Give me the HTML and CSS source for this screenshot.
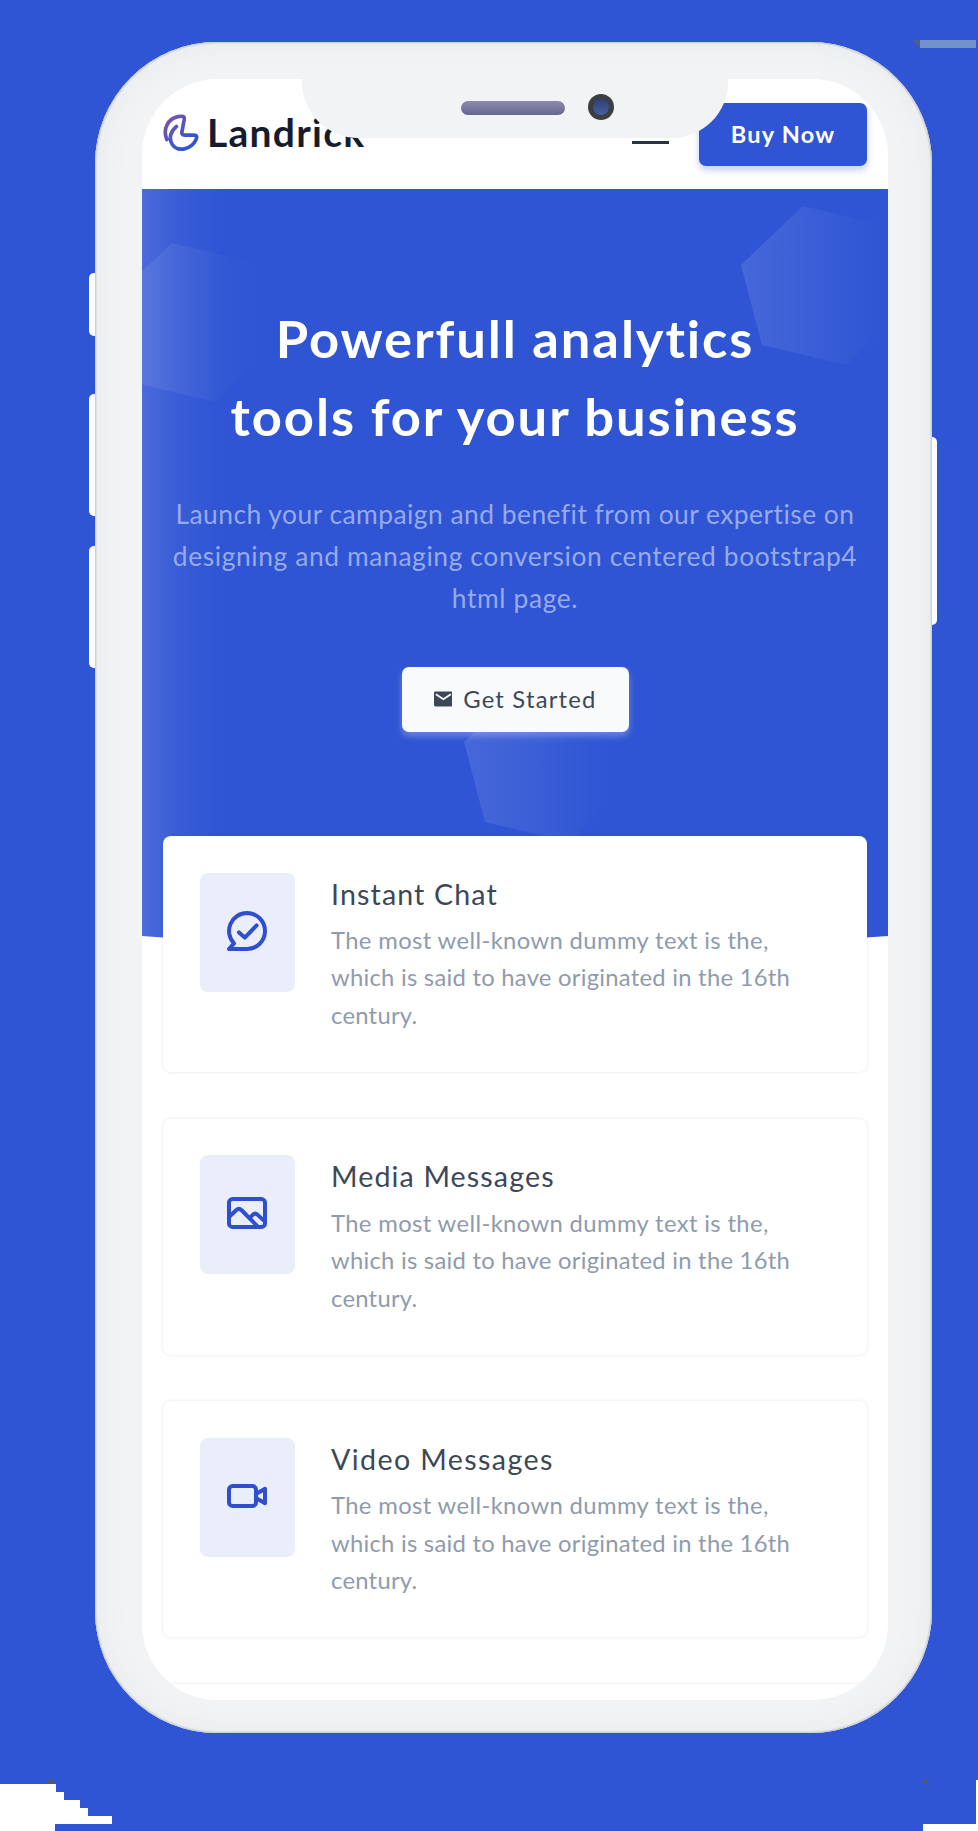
FILE: index.html
```html
<!DOCTYPE html>
<html lang="en">
<head>
<meta charset="utf-8">
<title>Landrick</title>
<link rel="stylesheet" href="styles.css">
</head>
<body>
<svg class="backdrop" viewBox="0 0 978 1831" aria-hidden="true">
  <path d="M912 40h8v7z" fill="#50607e"/>
  <path d="M920 40h56v8h-56z" fill="#7292cc"/>
  <path d="M0 1784h56v8h8v8h16v8h8v8h24v8H55v7H0zM976 1780h2v51h-55v-7h53z" fill="#fff"/>
  <path d="M48 1780h5v4h-5zM923 1780h5v4h-5z" fill="#4f5a6c"/>
</svg>
<main class="phone">
  <i class="key key-mute"></i><i class="key key-up"></i><i class="key key-down"></i><i class="key key-power"></i>
  <div class="bezel">
  <div class="screen">
    <header class="topbar">
      <a class="brand">
        <svg class="brand-mark" viewBox="0 0 36 38">
          <defs><linearGradient id="mark" x1="0" y1="0" x2="1" y2="1"><stop offset="0.1" stop-color="#7455ad"/><stop offset="0.8" stop-color="#2f55d4"/></linearGradient></defs>
          <path d="M3.800 25.500C-.5 15 5 4.500 15 2.600c5-.8 6.800-.4 6.200 2.900L19 17.500c-.5 2.500.5 3.700 2.500 3.700H31c3 0 3.300 1.800 1.800 4.800-4.500 9.500-18 12.500-23.500 4.500C5.500 24.500 7.500 17 13.500 12.500" fill="none" stroke="url(#mark)" stroke-width="3.700" stroke-linecap="round" stroke-linejoin="round"/>
        </svg>
        <span class="brand-name">Landrick</span>
      </a>
      <div class="actions">
        <span class="menu"></span>
        <a class="buy">Buy Now</a>
      </div>
    </header>
    <section class="hero">
      <svg class="shapes" viewBox="0 0 746 760" aria-hidden="true">
        <defs>
          <linearGradient id="fade"><stop offset="0" stop-color="#fff" stop-opacity=".11"/><stop offset=".86" stop-color="#fff" stop-opacity="0"/></linearGradient>
          <linearGradient id="edge"><stop offset="0" stop-color="#fff" stop-opacity=".13"/><stop offset=".45" stop-color="#fff" stop-opacity=".045"/><stop offset="1" stop-color="#fff" stop-opacity="0"/></linearGradient>
          <path id="hex" d="M62 0 0 59l21 80 84 20 62-60-21-79z" fill="url(#fade)"/>
        </defs>
        <path d="M0 0h746v747Q373 775 0 747z" fill="#2f55d4"/>
        <path d="M0 0h80v751L0 747z" fill="url(#edge)"/>
        <use href="#hex" x="599" y="17"/><use href="#hex" x="-32" y="54"/><use href="#hex" x="322" y="494"/>
      </svg>
      <h1 class="headline"><span class="headline-top">Powerfull analytics</span><br><span class="headline-end">tools for your business</span></h1>
      <p class="lead"><span class="lead-first">Launch your campaign and benefit from our expertise on</span><br><span>designing and managing conversion centered bootstrap4</span><br><span>html page.</span></p>
      <a class="start">
        <svg class="mail" viewBox="0 0 20 16"><rect width="20" height="16" rx="1.500" fill="#3c4858"/><path d="m2 2.800 8 5.400 8-5.400" fill="none" stroke="#fff" stroke-width="1.900"/></svg>
        <span>Get Started</span>
      </a>
    </section>
    <section class="features">
      <article class="card">
        <div class="tile"><svg class="icon" viewBox="0 0 24 24"><path d="M12 3a9 9 0 0 0-6.500 15.200L3 21h9a9 9 0 0 0 0-18z"/><path d="m8 12.700 2.900 2.600 5.900-6.100"/></svg></div>
        <div class="body"><h2 class="title">Instant Chat</h2><p class="text"><span class="text-first">The most well-known dummy text is the,</span><br><span>which is said to have originated in the 16th</span><br><span>century.</span></p></div>
      </article>
      <article class="card">
        <div class="tile"><svg class="icon" viewBox="0 0 24 24"><rect x="3" y="5" width="18" height="14" rx="1.800"/><path d="m3 14 3.700-3.500c.8-.7 1.700-.7 2.500 0l8.200 8.300M13.500 14.300l1.500-1.500c.7-.6 1.500-.6 2.200 0L21 16.300"/></svg></div>
        <div class="body"><h2 class="title">Media Messages</h2><p class="text"><span class="text-first">The most well-known dummy text is the,</span><br><span>which is said to have originated in the 16th</span><br><span>century.</span></p></div>
      </article>
      <article class="card">
        <div class="tile"><svg class="icon" viewBox="0 0 24 24"><rect x="3" y="7" width="13.500" height="10" rx="1.800"/><path d="m16.500 11 4.500-2.600v7.200L16.500 13"/></svg></div>
        <div class="body"><h2 class="title title-video">Video Messages</h2><p class="text"><span class="text-first">The most well-known dummy text is the,</span><br><span>which is said to have originated in the 16th</span><br><span>century.</span></p></div>
      </article>
      <article class="card"></article>
    </section>
  </div>
  </div>
  <div class="notch"><i class="speaker"></i><i class="camera"></i></div>
</main>
</body>
</html>
```
FILE: styles.css
```css
* { box-sizing: border-box; }
body {
  margin: 0;
  height: 1831px;
  position: relative;
  overflow: hidden;
  background: #2f55d4;
  font-family: Lato, "Noto Sans", sans-serif;
}
h1, h2, p { margin: 0; font-weight: 400; }
svg { display: block; }
span { white-space: nowrap; }
.backdrop { position: absolute; inset: 0; width: 978px; height: 1831px; }

.phone { position: relative; width: 837px; height: 1691px; margin: 42px 0 0 95px; }
.bezel {
  position: relative;
  height: 1691px;
  padding: 37px 44px 33px 47px;
  border-radius: 122px;
  background: #f1f3f5;
  box-shadow: inset 0 0 2px 1px #bfc5c9, inset 0 0 28px 4px #e9ebec;
}
.key { position: absolute; width: 12px; background: #fff; border-radius: 5px; }
.key-mute { left: -6px; top: 231px; height: 63px; }
.key-up { left: -6px; top: 352px; height: 122px; }
.key-down { left: -6px; top: 504px; height: 122px; }
.key-power { right: -5px; top: 395px; height: 188px; }
.notch {
  position: absolute;
  left: 207px;
  top: 36px;
  width: 426px;
  height: 60px;
  border-radius: 0 0 56px 56px;
  background: #f1f3f5;
}
.speaker { position: absolute; left: 159px; top: 23px; width: 104px; height: 14px; border-radius: 7px; background: linear-gradient(#8c8aae, #66658b); }
.camera { position: absolute; left: 286px; top: 16px; width: 26px; height: 26px; border-radius: 50%; border: 5px solid #3b3e43; background: linear-gradient(#2b4178, #4a5f9b); }

.screen { height: 1621px; overflow: hidden; border-radius: 76px; background: #fff; }
.topbar { height: 110px; padding: 24px 21px 0; display: flex; justify-content: space-between; align-items: flex-start; }
.brand { display: flex; gap: 8px; padding-top: 9px; }
.brand-mark { width: 36px; height: 38px; margin-top: 2px; }
.brand-name { font-size: 39px; line-height: 40px; font-weight: 700; letter-spacing: 1.250px; color: #161c2d; }
.actions { display: flex; gap: 30px; }
.menu { width: 37px; height: 3px; margin-top: 38px; background: #2a3143; }
.buy {
  width: 168px;
  height: 63px;
  border-radius: 7px;
  background: #2f55d4;
  color: #fff;
  font-size: 23.500px;
  font-weight: 700;
  line-height: 62px;
  letter-spacing: 1.250px;
  text-align: center;
  box-shadow: 0 4px 7px rgba(47, 85, 212, .3);
}

.hero { position: relative; height: 647px; display: flex; flex-direction: column; align-items: center; text-align: center; }
.shapes { position: absolute; left: 0; top: 0; width: 746px; height: 760px; }
.headline { position: relative; padding-top: 110px; font-size: 52.500px; line-height: 78px; font-weight: 700; color: #fff; }
.headline-top { letter-spacing: 1.900px; }
.headline-end { letter-spacing: 1.950px; }
.lead { position: relative; margin-top: 38px; font-size: 26.400px; line-height: 42px; letter-spacing: .600px; color: #97aaea; }
.lead-first { letter-spacing: .470px; }
.start {
  position: relative;
  margin-top: 48px;
  width: 227px;
  height: 65px;
  padding: 0 32px 1px;
  display: flex;
  align-items: center;
  gap: 11px;
  border-radius: 7px;
  background: #f9fafc;
  color: #3c4858;
  font-size: 23.800px;
  letter-spacing: 1.200px;
  box-shadow: 0 4px 7px rgba(248, 249, 252, .3);
}
.mail { width: 20px; height: 16px; }

.features { position: relative; padding: 0 21px; display: grid; gap: 46.700px; }
.card {
  height: 236px;
  padding: 36.500px 36.500px 0;
  display: flex;
  gap: 36.500px;
  border-radius: 8px;
  background: #fff;
  box-shadow: 0 0 3px rgba(60, 72, 88, .15);
}
.tile { width: 95px; height: 119px; padding-top: 34px; border-radius: 8px; background: #eaeefb; }
.icon { width: 48px; height: 48px; margin: 0 auto; fill: none; stroke: #2f4fcf; stroke-width: 2; stroke-linecap: round; stroke-linejoin: round; }
.title { font-size: 28.600px; line-height: 42px; letter-spacing: 1.130px; color: #3c4858; }
.title-video { letter-spacing: 1.400px; }
.text { margin-top: 7.500px; font-size: 23.800px; line-height: 37.400px; letter-spacing: .260px; color: #8f9bad; }
.text-first { letter-spacing: .370px; }
```
